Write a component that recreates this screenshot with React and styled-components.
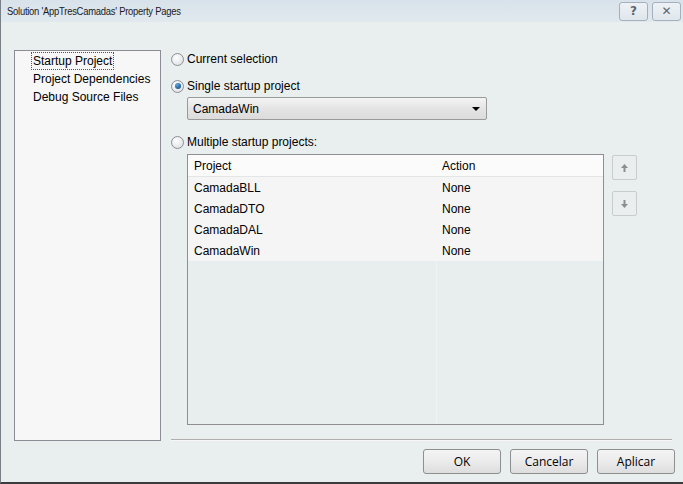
import styled, { createGlobalStyle } from "styled-components";

const GlobalStyle = createGlobalStyle`
  html, body {
    margin: 0;
    padding: 0;
    background: #e9efef;
  }
  body {
    font-family: "Liberation Sans", Arial, sans-serif;
    font-size: 12px;
    color: #000;
  }
`;

const Window = styled.div`
  width: 683px;
  height: 484px;
  box-sizing: border-box;
  border-left: 1px solid #7a8088;
  border-bottom: 2px solid #3c3c3c;
  background: #e9efef;
  display: flex;
  flex-direction: column;
`;

const TitleBar = styled.div`
  height: 22px;
  display: flex;
  align-items: center;
  justify-content: space-between;
  padding: 0 2px 0 6px;
  background: linear-gradient(#d8e2ea, #e1e9ee);
  font-family: "Liberation Sans", sans-serif;
  font-size: 11.5px;
  color: #1a1a1a;
`;

const TitleText = styled.span`
  display: inline-block;
  letter-spacing: -0.3px;
  transform: scaleX(0.82);
  transform-origin: left center;
  white-space: nowrap;
`;

const TitleButtons = styled.div`
  display: flex;
  gap: 4px;
`;

const TitleButton = styled.div`
  width: 29px;
  height: 19px;
  box-sizing: border-box;
  border: 1px solid #a4b0bd;
  border-radius: 3px;
  background: linear-gradient(#eef2f5, #dfe6ec);
  display: flex;
  align-items: center;
  justify-content: center;
  font-family: "DejaVu Sans", sans-serif;
  font-weight: bold;
  font-size: 12px;
  color: #5d6670;
`;

const Main = styled.div`
  flex: 1;
  display: flex;
  padding: 28px 11px 0 13px;
  gap: 10px;
`;

const PageList = styled.div`
  width: 147px;
  height: 391px;
  box-sizing: border-box;
  border: 1px solid #8c8c96;
  background: #f7f7f7;
  padding: 1px 0 0 16px;
  display: flex;
  flex-direction: column;
  align-items: flex-start;
`;

const PageItem = styled.div`
  height: 18px;
  line-height: 18px;
  padding: 0 2px;
  outline: ${(p) => (p.selected ? "1px dotted #555" : "none")};
  outline-offset: -1px;
`;

const RightColumn = styled.div`
  flex: 1;
  display: flex;
  flex-direction: column;
`;

const RadioRow = styled.label`
  display: flex;
  align-items: center;
  height: 18px;
  gap: 3px;
  margin-top: ${(p) => p.top || 0}px;
`;

const RadioDot = styled.span`
  width: 13px;
  height: 13px;
  box-sizing: border-box;
  border-radius: 50%;
  border: 1px solid #8c9096;
  background: radial-gradient(circle at 40% 35%, #ffffff, #d6d9dc);
  display: flex;
  align-items: center;
  justify-content: center;
  &::after {
    content: "";
    display: ${(p) => (p.checked ? "block" : "none")};
    width: 6px;
    height: 6px;
    border-radius: 50%;
    background: radial-gradient(circle at 35% 30%, #5aa6de, #0d3f74);
  }
`;

const Combo = styled.div`
  margin: 2px 0 0 16px;
  width: 300px;
  height: 23px;
  box-sizing: border-box;
  border: 1px solid #9a9a9a;
  border-radius: 2px;
  background: linear-gradient(#f4f4f4, #e4e4e4 50%, #dcdcdc);
  display: flex;
  align-items: center;
  justify-content: space-between;
  padding: 0 6px 0 5px;
`;

const ComboArrow = styled.span`
  width: 0;
  height: 0;
  border-left: 4px solid transparent;
  border-right: 4px solid transparent;
  border-top: 4px solid #000;
`;

const GridArea = styled.div`
  display: flex;
  gap: 8px;
  margin: 3px 0 0 16px;
`;

const Grid = styled.div`
  width: 417px;
  height: 271px;
  box-sizing: border-box;
  border: 1px solid #8f8f8f;
  display: flex;
  flex-direction: column;
`;

const GridRow = styled.div`
  display: grid;
  grid-template-columns: 248px 1fr;
  height: 21px;
  background: ${(p) => (p.header ? "#fbfbfb" : "#f5f5f5")};
  border-bottom: ${(p) => (p.header ? "1px solid #e4e6e6" : "none")};
  align-items: center;
`;

const Cell = styled.div`
  padding-left: 6px;
`;

const GridFill = styled.div`
  flex: 1;
  display: grid;
  grid-template-columns: 248px 1fr;
`;

const FillColumn = styled.div`
  background: #e8eded;
  border-left: ${(p) => (p.divided ? "1px solid #f0f3f3" : "none")};
`;

const MoveButtons = styled.div`
  display: flex;
  flex-direction: column;
  gap: 11px;
  padding-top: 1px;
`;

const MoveButton = styled.div`
  width: 25px;
  height: 25px;
  box-sizing: border-box;
  border: 1px solid #c9cccc;
  border-radius: 2px;
  background: #eaeeee;
  display: flex;
  align-items: center;
  justify-content: center;
`;

const Separator = styled.div`
  margin-top: auto;
  height: 1px;
  background: #b3aeae;
  border-bottom: 1px solid #f7f7f7;
`;

const Footer = styled.div`
  display: flex;
  justify-content: flex-end;
  gap: 9px;
  padding: 8px 8px 8px 0;
`;

const Button = styled.button`
  width: 78px;
  height: 25px;
  box-sizing: border-box;
  border: 1px solid #8e8f8f;
  border-radius: 3px;
  background: linear-gradient(#f4f4f4, #ebebeb 50%, #dddddd);
  font-family: "Open Sans", sans-serif;
  font-size: 12px;
  color: #000;
  padding: 0;
`;

const Arrow = ({ down }) => (
  <svg width="7" height="8" viewBox="0 0 7 8">
    <g fill="#8a8f92" transform={down ? "rotate(180 3.5 4)" : undefined}>
      <polygon points="3.5,0 7,4 0,4" />
      <rect x="2.5" y="4" width="2" height="4" />
    </g>
  </svg>
);

const projects = ["CamadaBLL", "CamadaDTO", "CamadaDAL", "CamadaWin"];

export default function App() {
  return (
    <>
      <GlobalStyle />
      <Window>
        <TitleBar>
          <TitleText>Solution 'AppTresCamadas' Property Pages</TitleText>
          <TitleButtons>
            <TitleButton>?</TitleButton>
            <TitleButton>✕</TitleButton>
          </TitleButtons>
        </TitleBar>
        <Main>
          <PageList>
            <PageItem selected>Startup Project</PageItem>
            <PageItem>Project Dependencies</PageItem>
            <PageItem>Debug Source Files</PageItem>
          </PageList>
          <RightColumn>
            <RadioRow>
              <RadioDot />
              Current selection
            </RadioRow>
            <RadioRow top={9}>
              <RadioDot checked />
              Single startup project
            </RadioRow>
            <Combo>
              <span>CamadaWin</span>
              <ComboArrow />
            </Combo>
            <RadioRow top={13}>
              <RadioDot />
              Multiple startup projects:
            </RadioRow>
            <GridArea>
              <Grid>
                <GridRow header>
                  <Cell>Project</Cell>
                  <Cell>Action</Cell>
                </GridRow>
                {projects.map((name) => (
                  <GridRow key={name}>
                    <Cell>{name}</Cell>
                    <Cell>None</Cell>
                  </GridRow>
                ))}
                <GridFill>
                  <FillColumn />
                  <FillColumn divided />
                </GridFill>
              </Grid>
              <MoveButtons>
                <MoveButton>
                  <Arrow />
                </MoveButton>
                <MoveButton>
                  <Arrow down />
                </MoveButton>
              </MoveButtons>
            </GridArea>
            <Separator />
          </RightColumn>
        </Main>
        <Footer>
          <Button>OK</Button>
          <Button>Cancelar</Button>
          <Button>Aplicar</Button>
        </Footer>
      </Window>
    </>
  );
}
